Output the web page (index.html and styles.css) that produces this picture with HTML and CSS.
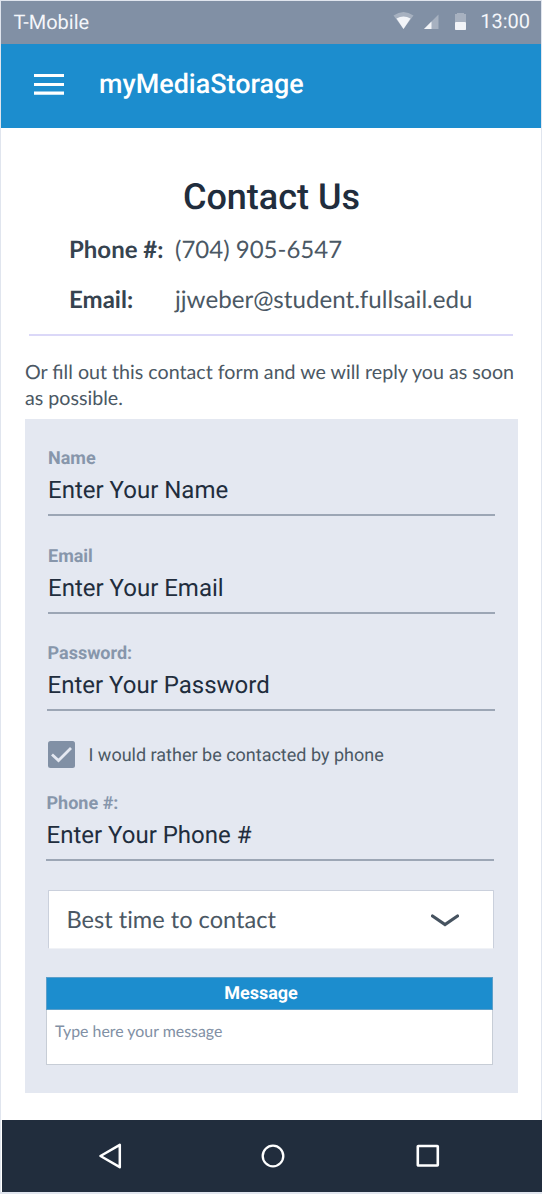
FILE: index.html
```html
<!DOCTYPE html>
<html lang="en">
<head>
<meta charset="utf-8">
<title>myMediaStorage - Contact Us</title>
<link rel="stylesheet" href="styles.css">
</head>
<body>
<div class="phone">
  <div class="status">
    <span class="carrier">T-Mobile</span>
    <svg class="status-icons" width="76" height="20" viewBox="0 0 76 20">
      <path d="M1.500 4.500Q11.500-2.500 21.500 4.500L11.500 18Z" fill="#fff" opacity=".3"/>
      <path d="M4.500 7.500Q11.500 3.500 18.500 7.500L11.500 18Z" fill="#f2f4f8"/>
      <path d="M32 18L46.500 3.500V18Z" fill="#fff" opacity=".3"/>
      <path d="M32 18L39.500 10.500V18Z" fill="#f2f4f8"/>
      <path d="M65 2h7v1h2V11H63V3h2Z" fill="#fff" opacity=".3"/>
      <rect x="63" y="11" width="11" height="8" rx=".7" fill="#f2f4f8"/>
    </svg>
    <span class="clock">13:00</span>
  </div>
  <header class="appbar">
    <svg class="menu" width="30" height="21" viewBox="0 0 30 21"><path d="M0 1.500H30M0 10.500H30M0 19.200H30" stroke="#fff" stroke-width="3.200"/></svg>
    <span class="brand">myMediaStorage</span>
  </header>
  <main class="content">
    <h1 class="title">Contact Us</h1>
    <dl class="details">
      <dt>Phone #:</dt><dd>(704) 905-6547</dd>
      <dt>Email:</dt><dd class="address">jjweber@student.fullsail.edu</dd>
    </dl>
    <hr class="rule">
    <p class="intro">Or fill out this contact form and we will reply you as soon as possible.</p>
    <form class="form">
      <div class="field"><div class="label">Name</div><div class="value">Enter Your Name</div></div>
      <div class="field field-email"><div class="label">Email</div><div class="value">Enter Your Email</div></div>
      <div class="field field-password"><div class="label">Password:</div><div class="value">Enter Your Password</div></div>
      <div class="check">
        <svg class="box" width="27" height="27" viewBox="0 0 27 27"><rect width="27" height="27" rx="2.500" fill="#8190a5"/><path d="M4 13.500L10.500 19.500L23 7" fill="none" stroke="#e4e8f1" stroke-width="2.800"/></svg>
        <span class="check-text">I would rather be contacted by phone</span>
      </div>
      <div class="field field-phone"><div class="label">Phone #:</div><div class="value">Enter Your Phone #</div></div>
      <div class="select">
        <span>Best time to contact</span>
        <svg class="chevron" width="28" height="14" viewBox="0 0 28 14"><path d="M1.500 2L14 10.500L26.500 2" fill="none" stroke="#465360" stroke-width="3.200" stroke-linecap="round"/></svg>
      </div>
      <div class="message">
        <div class="message-head">Message</div>
        <div class="message-body">Type here your message</div>
      </div>
    </form>
  </main>
  <nav class="nav">
    <svg width="23" height="26" viewBox="0 0 23 26"><path d="M1.500 13L20.800 1.800V24.200Z" fill="none" stroke="#fff" stroke-width="2.500" stroke-linejoin="round"/></svg>
    <svg class="home" width="24" height="24" viewBox="0 0 24 24"><circle cx="12" cy="12" r="10.300" fill="none" stroke="#fff" stroke-width="2.300"/></svg>
    <svg width="24" height="24" viewBox="0 0 24 24"><rect x="1.800" y="2" width="20" height="19.500" rx=".5" fill="none" stroke="#fff" stroke-width="2.600"/></svg>
  </nav>
</div>
</body>
</html>
```

FILE: styles.css
```css
* { box-sizing: border-box; }
body {
  margin: 0;
  font-family: Roboto, sans-serif;
  background: #fff;
  text-rendering: geometricPrecision;
}
.phone {
  width: 542px;
  height: 1194px;
  display: flex;
  flex-direction: column;
  border: 1px solid #e0e5ee;
  border-bottom-width: 2px;
}
.status {
  height: 43px;
  display: flex;
  align-items: center;
  padding: 0 11px 0 12.5px;
  background: #8190a5;
  color: #f4f6fa;
  font-size: 20px;
}
.carrier { padding-bottom: 2px; }
.status-icons { margin-left: auto; margin-right: 12px; margin-bottom: 3px; }
.clock { padding-bottom: 3px; }
.appbar {
  height: 84px;
  display: flex;
  align-items: center;
  padding: 0 0 3px 33px;
  background: #1c8dce;
  color: #fff;
}
.brand { margin-left: 35px; padding-bottom: 2px; font-size: 26.950px; font-weight: 500; }
.content { height: 992px; padding: 47px 23px 0 24px; }
.title {
  margin: 0;
  text-align: center;
  font-size: 36px;
  font-weight: 500;
  line-height: 44px;
  color: #212d3d;
}
.details {
  display: grid;
  grid-template-columns: 106px 1fr;
  margin: 6px 0 0 44px;
  font-family: Lato, sans-serif;
  font-size: 24px;
  line-height: 50px;
  color: #4b5864;
}
.details dt { font-weight: 700; color: #36434f; }
.details dd { margin: 0; }
.details .address { font-size: 24.150px; }
.rule {
  height: 2px;
  margin: 9px 5px 0 4px;
  border: 0;
  background: #dbd8f8;
}
.intro {
  margin: 24px -4px 0 0;
  font-family: Lato, sans-serif;
  font-size: 19.660px;
  line-height: 26px;
  color: #4b5864;
}
.form {
  height: 674.500px;
  margin-top: 6.500px;
  padding: 29.500px 23px 0;
  background: #e4e8f1;
}
.field { height: 68px; border-bottom: 2px solid #9ca6b5; }
.field-email { margin-top: 30px; }
.field-password { margin-top: 29px; margin-left: -1px; }
.field-phone { margin-top: 25px; margin-left: -2px; margin-right: 1px; }
.label { font-size: 18px; font-weight: 700; line-height: 22px; color: #8796ab; }
.value { padding-top: 4px; font-size: 24px; line-height: 32px; color: #212d3d; }
.field-password .label, .field-password .value,
.field-phone .label, .field-phone .value { padding-left: .5px; }
.check {
  display: flex;
  align-items: center;
  gap: 13.5px;
  height: 27px;
  margin-top: 30px;
  font-size: 18px;
  color: #4b5864;
}
.check-text { padding-top: 2px; }
.select {
  display: flex;
  align-items: center;
  justify-content: space-between;
  height: 59px;
  margin: 29px 1px 0 0;
  padding: 0 34px 0 17.5px;
  border: 1px solid #cad0dc;
  border-bottom-color: #f0f2f6;
  border-radius: 1px;
  background: #fff;
  font-family: Lato, sans-serif;
  font-size: 23.600px;
  font-variant-ligatures: none;
  color: #4b5864;
}
.chevron { margin-top: 3px; }
.message {
  height: 88px;
  margin: 28px 2px 0 -2px;
  border: 1px solid #c7cdd6;
  background: #fff;
}
.message-head {
  height: 33px;
  margin: -1px -1px 0;
  padding-right: 17px;
  border: 1px solid #5c9fca;
  background: #1c8dce;
  color: #fff;
  text-align: center;
  font-size: 18px;
  font-weight: 700;
  line-height: 32px;
}
.message-body {
  padding: 12px 8px 0;
  font-family: Lato, sans-serif;
  font-size: 15.900px;
  line-height: 20px;
  color: #8190a5;
}
.nav {
  height: 72px;
  display: flex;
  align-items: center;
  justify-content: space-between;
  margin: 0 -1px 0 1px;
  padding: 0 102px 0 97px;
  background: #212d3d;
}
.home { margin-left: 8px; }
```
